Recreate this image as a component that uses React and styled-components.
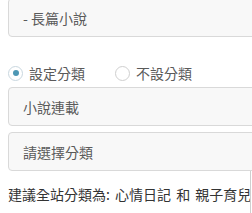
import styled, { createGlobalStyle } from "styled-components";

const GlobalStyle = createGlobalStyle`
  html, body {
    margin: 0;
    padding: 0;
    background: #fff;
    overflow: hidden;
  }
  body {
    font-family: "Noto Sans CJK TC", "Noto Sans", sans-serif;
    color: #555;
  }
`;

const Page = styled.div`
  width: 280px;
  margin-top: -2px;
  padding-left: 8px;
  display: flex;
  flex-direction: column;
`;

const Field = styled.div`
  height: 37px;
  display: flex;
  align-items: center;
  padding-left: 14px;
  background: #f8f8f8;
  border: 1px solid #d9d9d9;
  border-radius: 4px;
  font-size: 14px;
  color: #5a5a5a;
  margin-top: ${(p) => p.$gap || 0}px;
`;

const RadioRow = styled.div`
  display: flex;
  align-items: center;
  margin-top: 27px;
  height: 18px;
`;

const RadioItem = styled.label`
  display: flex;
  align-items: center;
  gap: 6px;
  font-size: 14px;
  color: #5a5a5a;
  margin-right: 30px;
`;

const Circle = styled.span`
  width: 13px;
  height: 13px;
  border-radius: 50%;
  border: 1px solid ${(p) => (p.$on ? "#c9d7df" : "#cfcfcf")};
  background: #fff;
  display: flex;
  align-items: center;
  justify-content: center;
  &::after {
    content: "";
    width: 6px;
    height: 6px;
    border-radius: 50%;
    background: ${(p) => (p.$on ? "#4d97b4" : "transparent")};
  }
`;

const HintRow = styled.div`
  width: 242px;
  height: 46px;
  border-right: 1px solid #cfcfcf;
  display: flex;
  align-items: center;
  font-size: 14px;
  word-spacing: 2px;
  color: #333;
  white-space: nowrap;
  overflow: hidden;
`;

export default function App() {
  return (
    <>
      <GlobalStyle />
      <Page>
        <Field>- 長篇小說</Field>
        <RadioRow>
          <RadioItem>
            <Circle $on />
            設定分類
          </RadioItem>
          <RadioItem>
            <Circle />
            不設分類
          </RadioItem>
        </RadioRow>
        <Field $gap={5}>小說連載</Field>
        <Field $gap={6}>請選擇分類</Field>
        <HintRow>建議全站分類為: 心情日記 和 親子育兒</HintRow>
      </Page>
    </>
  );
}
